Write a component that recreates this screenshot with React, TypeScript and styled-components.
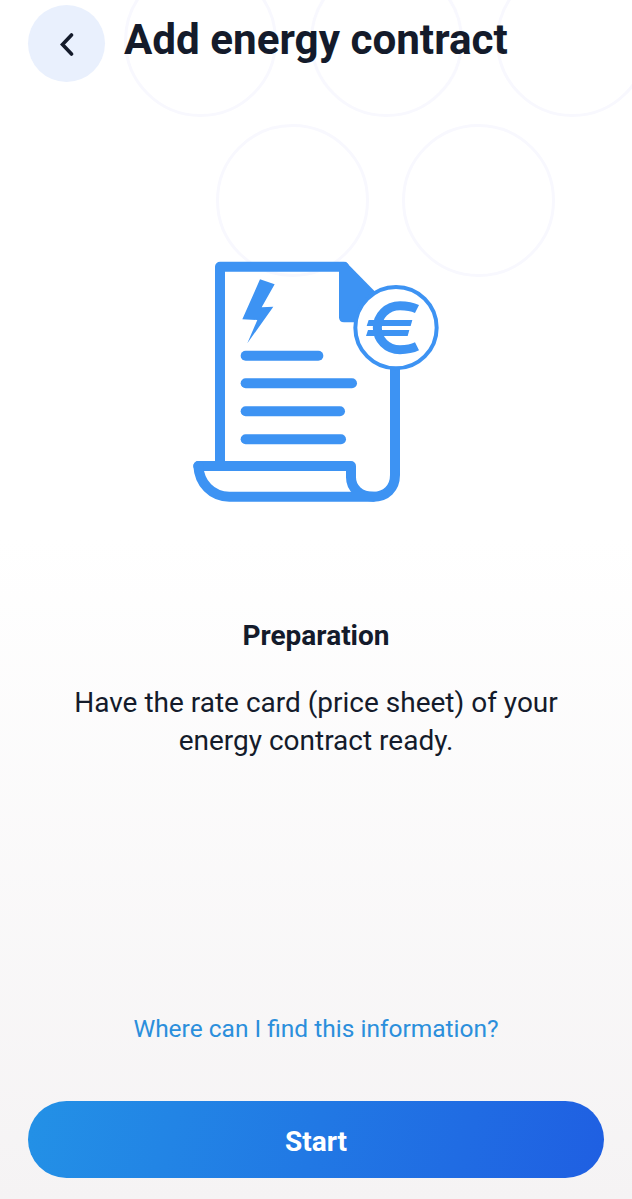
import styled, { createGlobalStyle } from 'styled-components';

const GlobalStyle = createGlobalStyle`
  html, body {
    margin: 0;
    padding: 0;
  }
  body {
    font-family: Roboto, "Liberation Sans", sans-serif;
  }
`;

const bubbles = [
  { left: 124, top: -36 },
  { left: 310, top: -36 },
  { left: 496, top: -36 },
  { left: 216, top: 124 },
  { left: 402, top: 124 },
];

const App = () => (
  <Screen>
    <GlobalStyle />
    {bubbles.map((b) => (
      <Bubble key={b.left} $left={b.left} $top={b.top} />
    ))}
    <Header>
      <BackButton aria-label="Back">
        <svg width="18" height="24" viewBox="0 0 18 24" fill="none">
          <path d="M13.5 3 L4.5 12.5 L13.5 22" stroke="#141b2b" strokeWidth="3.6" strokeLinecap="round" strokeLinejoin="miter" />
        </svg>
      </BackButton>
      <Title>Add energy contract</Title>
    </Header>
    <Illustration>
      <svg width="290" height="280" viewBox="0 0 870 840" fill="none">
        <g stroke="#3d93f3" strokeWidth="30" strokeLinecap="round" strokeLinejoin="round">
          <path d="M150 678 V80 H522" />
          <path d="M85 678 H543 V712 C543 745 570 770 610 770 C648 770 675 745 675 705 V385" />
          <path d="M85 678 C88 730 125 770 178 770 H610" />
        </g>
        <path d="M507 90 L527 65 L625 165 L570 247 H522 Q507 247 507 232 Z" fill="#3d93f3" />
        <path d="M270 118 L314 133 L275 202 L310 200 L232 310 L262 240 L217 238 Z" fill="#3d93f3" />
        <g stroke="#3d93f3" strokeWidth="30" strokeLinecap="round">
          <path d="M227 347 H445" />
          <path d="M227 430 H546" />
          <path d="M227 514 H510" />
          <path d="M227 598 H513" />
        </g>
        <circle cx="678" cy="263" r="122" fill="#fff" stroke="#3d93f3" strokeWidth="12" />
        <path d="M741 207 C725 199 705 197 690 197 C650 197 622 228 622 263 C622 298 650 329 690 329 C705 329 725 327 741 319" stroke="#3d93f3" strokeWidth="27" />
        <path d="M596 240 H727 L722 258 H590 Z M594 270 H718 L713 288 H588 Z" fill="#3d93f3" />
      </svg>
    </Illustration>
    <Heading>Preparation</Heading>
    <Description>
      Have the rate card (price sheet) of your
      <br />
      energy contract ready.
    </Description>
    <Spacer />
    <HelpLink href="#">Where can I find this information?</HelpLink>
    <StartButton>Start</StartButton>
  </Screen>
);

export default App;

const Screen = styled.div`
  position: relative;
  display: flex;
  flex-direction: column;
  align-items: center;
  height: 1199px;
  box-sizing: border-box;
  padding: 5px 28px 21px;
  overflow: hidden;
  background: linear-gradient(180deg, #ffffff 0%, #ffffff 45%, #f5f3f4 100%);
`;

const Bubble = styled.div<{ $left: number; $top: number }>`
  position: absolute;
  left: ${(p) => p.$left}px;
  top: ${(p) => p.$top}px;
  width: 153px;
  height: 153px;
  box-sizing: border-box;
  border: 3px solid #f8f8fe;
  border-radius: 50%;
`;

const Header = styled.header`
  position: relative;
  display: flex;
  align-self: stretch;
  gap: 19px;
`;

const BackButton = styled.button`
  display: flex;
  align-items: center;
  justify-content: center;
  flex: none;
  width: 77px;
  height: 77px;
  padding: 0;
  border: none;
  border-radius: 50%;
  background: #e9f0fd;
`;

const Title = styled.h1`
  margin: 7px 0 0;
  font-size: 42.2px;
  line-height: 56px;
  font-weight: 700;
  color: #141b2b;
`;

const Illustration = styled.div`
  position: relative;
  display: flex;
  justify-content: center;
  margin-top: 158px;
  margin-left: -2px;
`;

const Heading = styled.h2`
  margin: 97px 0 0;
  font-size: 28px;
  line-height: 38px;
  font-weight: 700;
  color: #141b2b;
`;

const Description = styled.p`
  margin: 29px 0 0;
  font-size: 28px;
  line-height: 38px;
  font-weight: 400;
  text-align: center;
  color: #141b2b;
`;

const Spacer = styled.div`
  flex: 1;
`;

const HelpLink = styled.a`
  font-size: 24.5px;
  line-height: 32px;
  color: #2b8fdc;
  text-decoration: none;
`;

const StartButton = styled.button`
  align-self: stretch;
  flex: none;
  height: 77px;
  margin-top: 56px;
  padding: 3px 0 0;
  border: none;
  border-radius: 39px;
  background: linear-gradient(105deg, #2391e6 0%, #1f5fe2 100%);
  font-family: Roboto, "Liberation Sans", sans-serif;
  font-size: 28px;
  font-weight: 700;
  color: #fff;
`;
